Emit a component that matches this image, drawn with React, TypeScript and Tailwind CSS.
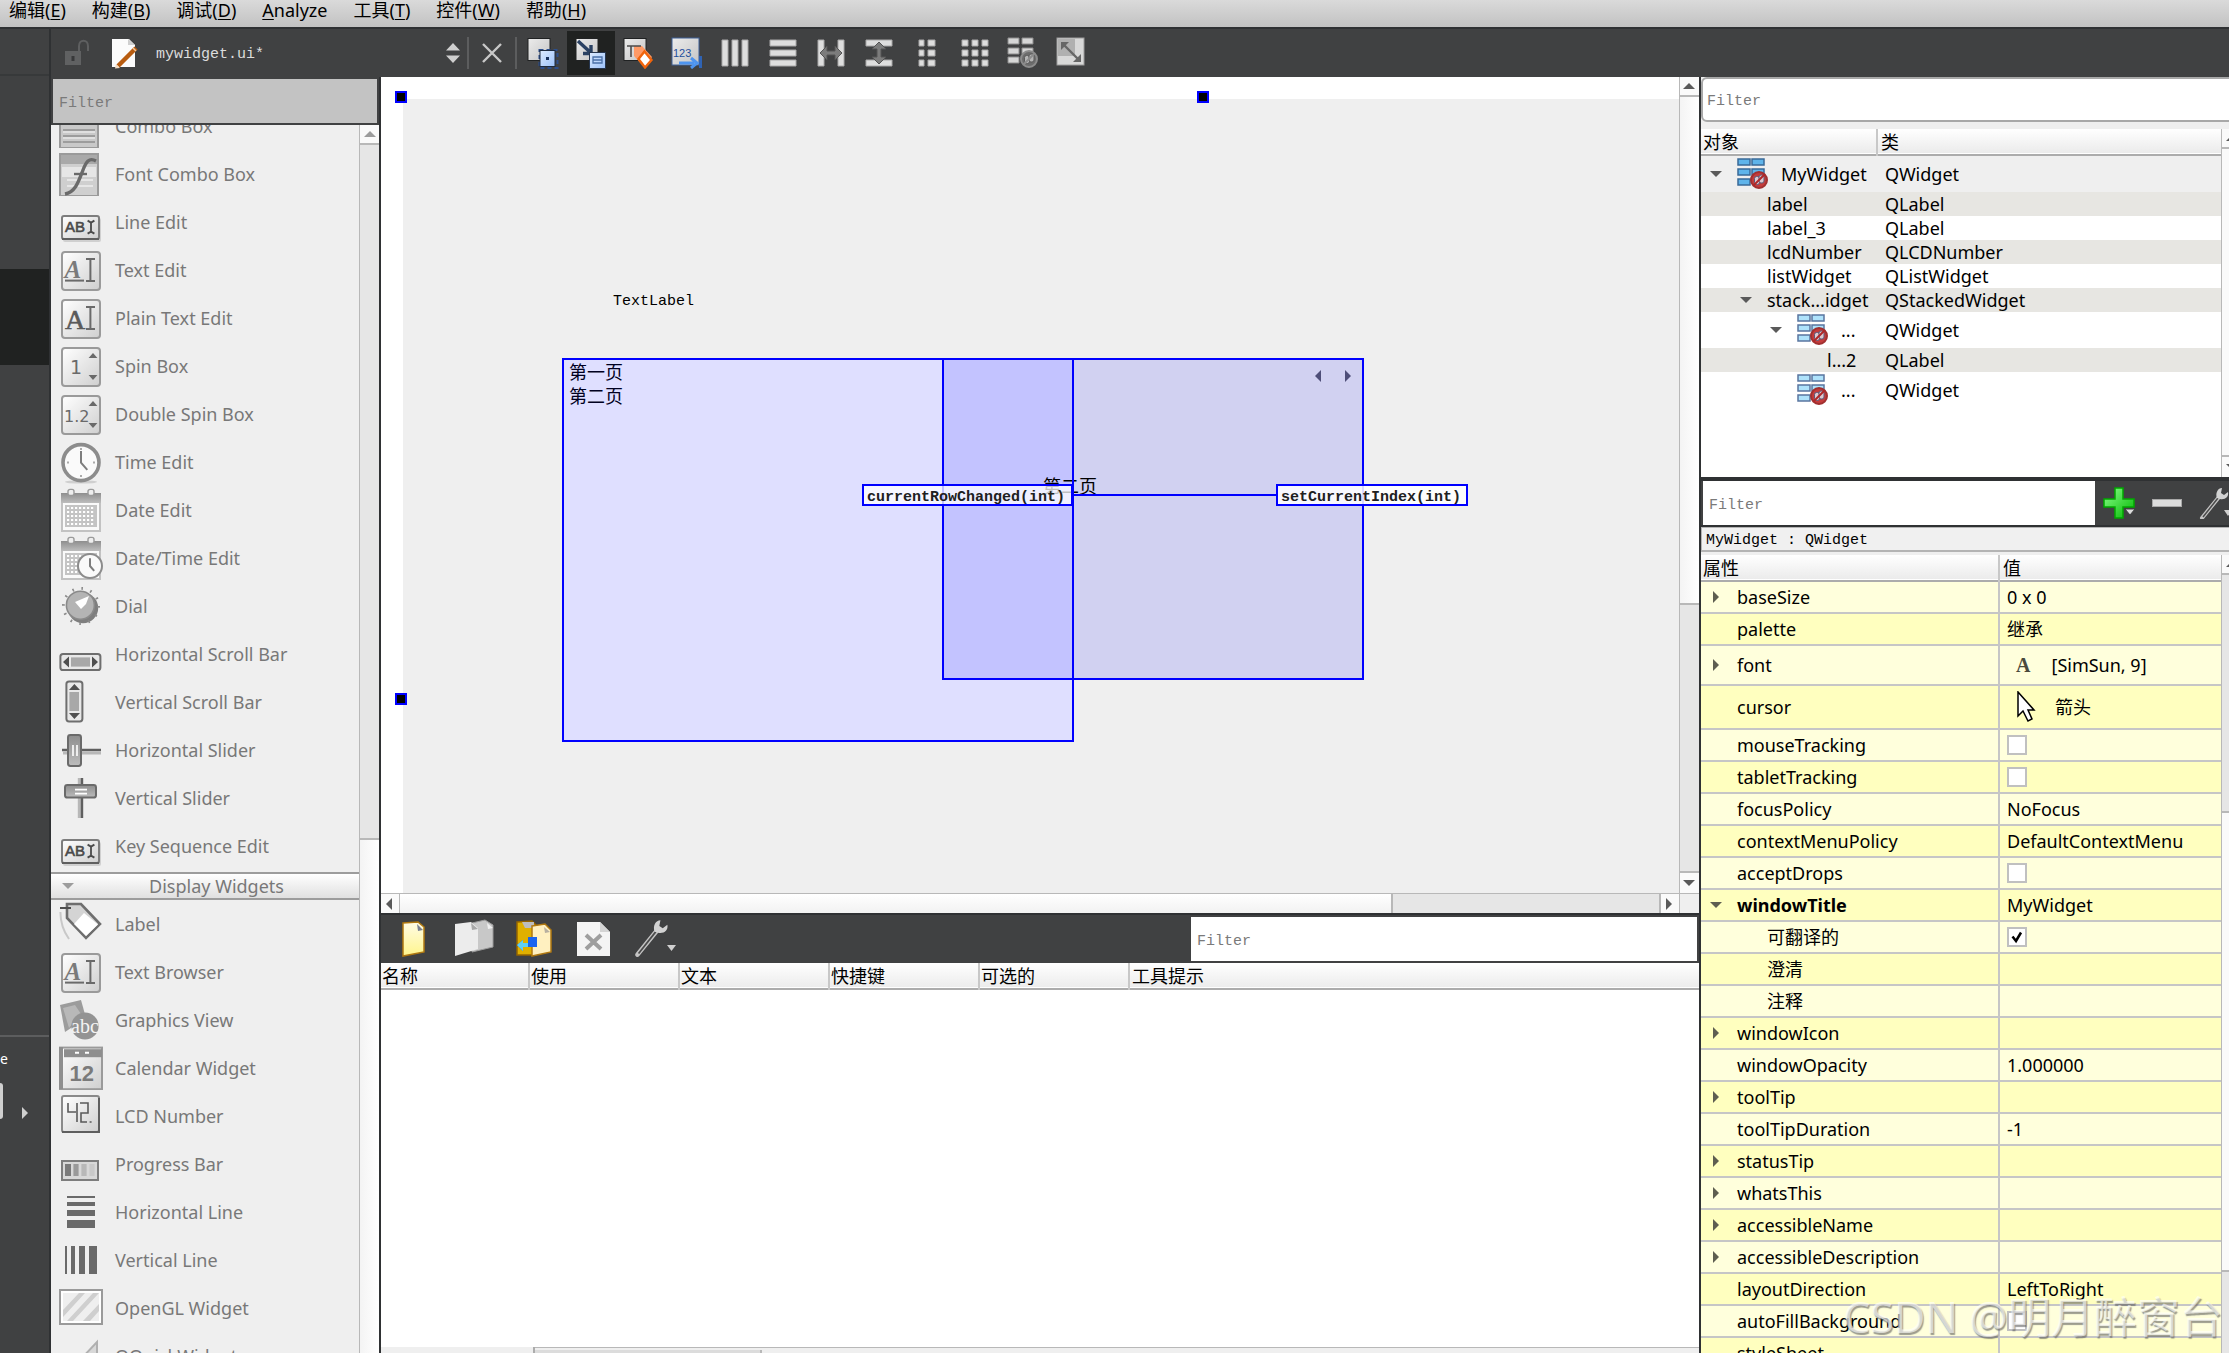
import React from "react";
import clsx from "clsx";

const UI = "font-['Noto_Sans','Noto_Sans_CJK_SC',sans-serif]";
const MONO = "font-['Liberation_Mono','Noto_Sans_CJK_SC',monospace]";

/* ---------- small shared pieces ---------- */

type Dir = "up" | "down" | "left" | "right";

const arrowPaths: Record<Dir, string> = {
  up: "M6 3 L12 9 L0 9 Z",
  down: "M0 3 L12 3 L6 9 Z",
  left: "M3 6 L9 0 L9 12 Z",
  right: "M3 0 L9 6 L3 12 Z",
};

const Arrow: React.FC<{ dir: Dir; className?: string }> = ({ dir, className }) => (
  <svg viewBox="0 0 12 12" className={clsx("h-3 w-3 shrink-0", className ?? "fill-[#5a5a5a]")}>
    <path d={arrowPaths[dir]} />
  </svg>
);

const ScrollButton: React.FC<{ dir: Dir; label: string; className?: string; arrow?: string }> = ({
  dir,
  label,
  className,
  arrow,
}) => (
  <button
    aria-label={label}
    className={clsx("flex shrink-0 items-center justify-center border-[#b8b8b8] bg-[#fafafa]", className)}
  >
    <Arrow dir={dir} className={arrow} />
  </button>
);

const Filter: React.FC<{ label: string; className?: string }> = ({ label, className }) => (
  <input
    aria-label={label}
    placeholder="Filter"
    className={clsx("min-w-0 pt-1 text-[15px] outline-none placeholder:text-[#7a7a7a]", MONO, className)}
  />
);

const Defs = () => (
  <svg className="absolute h-0 w-0" aria-hidden="true">
    <defs>
      <linearGradient id="metal" x1="0" y1="0" x2="1" y2="1">
        <stop offset="0" stopColor="#ffffff" />
        <stop offset="1" stopColor="#cfcfcf" />
      </linearGradient>
      <linearGradient id="steel" x1="0" y1="0" x2="0" y2="1">
        <stop offset="0" stopColor="#8e8e8e" />
        <stop offset="1" stopColor="#bdbdbd" />
      </linearGradient>
      <linearGradient id="paper" x1="0" y1="0" x2="1" y2="1">
        <stop offset="0" stopColor="#ececec" />
        <stop offset="1" stopColor="#c4c4c4" />
      </linearGradient>
      <linearGradient id="bluebox" x1="0" y1="0" x2="1" y2="1">
        <stop offset="0" stopColor="#dcebff" />
        <stop offset="1" stopColor="#9cc2fa" />
      </linearGradient>
      <linearGradient id="yellow" x1="0" y1="0" x2="0" y2="1">
        <stop offset="0" stopColor="#fffbe6" />
        <stop offset="1" stopColor="#fff58c" />
      </linearGradient>
      <linearGradient id="green" x1="0" y1="0" x2="1" y2="1">
        <stop offset="0" stopColor="#8dff8d" />
        <stop offset="1" stopColor="#00b800" />
      </linearGradient>
    </defs>
  </svg>
);

/* ---------- widget box icons, drawn on a 22 unit grid ---------- */

const Frame = () => (
  <rect x="1.5" y="2" width="19" height="19" rx="1.5" fill="url(#metal)" stroke="#9a9a9a" />
);

const AbiBox = () => (
  <>
    <rect x="2" y="9" width="19" height="12" rx="1" fill="#d0d0d0" />
    <rect x="1.5" y="8" width="18.5" height="11.5" rx="1" fill="url(#metal)" stroke="#7d7d7d" />
    <path d="M1.5 19.5 H20" stroke="#5f5f5f" />
    <text x="3" y="16.2" fontSize="7.5" fill="#4a4a4a" stroke="#4a4a4a" strokeWidth="0.3" className="font-['Liberation_Sans',sans-serif]">
      AB
    </text>
    <path d="M14.3 10.3 L16 11.3 L17.7 10.3 M16 11 V16 M14.3 16.8 L16 15.8 L17.7 16.8" stroke="#4a4a4a" strokeWidth="0.9" fill="none" />
  </>
);

const LetterI = () => <path d="M13.5 5.5 H18 M15.7 5.5 V16.5 M13.5 16.5 H18" stroke="#6a6a6a" fill="none" />;

const SpinArrows = () => (
  <path d="M14.8 7 L17 4.5 L19.2 7 Z M14.8 15.5 L17 18 L19.2 15.5 Z" fill="#6a6a6a" />
);

const CalendarBody = () => (
  <>
    <rect x="1.5" y="3.5" width="19" height="18" fill="#fafafa" stroke="#c2c2c2" />
    <rect x="1" y="2.5" width="20" height="5" fill="url(#steel)" />
    <rect x="4.5" y="0.7" width="3" height="3" rx="1" fill="#eee" stroke="#9a9a9a" strokeWidth="0.7" />
    <rect x="14.5" y="0.7" width="3" height="3" rx="1" fill="#eee" stroke="#9a9a9a" strokeWidth="0.7" />
    <rect x="3" y="8.5" width="16" height="11" fill="#c4c4c4" />
    <path d="M4 10 H18 M4 12 H18 M4 14 H18 M4 16 H18 M4 18 H18" stroke="#fff" strokeWidth="1.1" strokeDasharray="1.1 0.9" />
  </>
);

const ClockFace: React.FC<{ cx: number; cy: number; r: number }> = ({ cx, cy, r }) => (
  <>
    <circle cx={cx} cy={cy} r={r} fill="#fafafa" stroke="#8c8c8c" strokeWidth={r > 7 ? 1.8 : 1} />
    <path d={`M${cx} ${cy - r * 0.65} V${cy} L${cx + r * 0.35} ${cy + r * 0.4}`} stroke="#7d7d7d" fill="none" />
  </>
);

const widgetIcons: Record<string, React.ReactNode> = {
  combo: (
    <>
      <rect x="0.5" y="1" width="19" height="21" fill="#c9c9c9" stroke="#9a9a9a" />
      <path d="M2 13 H18 M2 16 H18 M2 19 H18" stroke="#8e8e8e" strokeWidth="0.8" />
      <path d="M2 14 H18 M2 17 H18" stroke="#e8e8e8" strokeWidth="0.8" />
    </>
  ),
  fontCombo: (
    <>
      <rect x="0.5" y="1" width="19" height="21" fill="#cfcfcf" stroke="#9a9a9a" />
      <rect x="1" y="1.5" width="18" height="4.5" fill="#a9a9a9" />
      <path d="M2 8 H18 V12 H2 Z M4 14 H17 M4 17 H17" fill="#e6e6e6" stroke="#e6e6e6" />
      <path d="M18.5 4.5 C15 2.5 13.5 5 12 9 C10 14 8.5 20 3 21" stroke="#6a6a6a" strokeWidth="1.7" fill="none" />
      <path d="M7.5 11 H14" stroke="#6a6a6a" strokeWidth="1.2" />
    </>
  ),
  abi: <AbiBox />,
  textEdit: (
    <>
      <Frame />
      <text x="2.8" y="15" fontSize="12.5" fontStyle="italic" fontWeight="bold" fill="#7a7a7a" className="font-['Liberation_Serif',serif]">
        A
      </text>
      <LetterI />
      <path d="M3 16.3 H12.5" stroke="#6a6a6a" />
    </>
  ),
  plainText: (
    <>
      <Frame />
      <text x="3" y="16.5" fontSize="14" fill="#5a5a5a" stroke="#5a5a5a" strokeWidth="0.3" className="font-['Liberation_Serif',serif]">
        A
      </text>
      <LetterI />
    </>
  ),
  spin: (
    <>
      <Frame />
      <text x="5.5" y="15" fontSize="9.5" fill="#6a6a6a" className="font-['DejaVu_Sans',sans-serif]">
        1
      </text>
      <SpinArrows />
    </>
  ),
  doubleSpin: (
    <>
      <Frame />
      <text x="2.5" y="15" fontSize="8" fill="#6a6a6a" className="font-['DejaVu_Sans',sans-serif]">
        1.2
      </text>
      <SpinArrows />
    </>
  ),
  time: (
    <>
      <ellipse cx="11" cy="21" rx="8" ry="0.8" fill="#cfcfcf" />
      <ClockFace cx={11} cy={11.3} r={9} />
      <path d="M11 4 V5 M18 11.3 H17 M11 18.5 V17.5 M4 11.3 H5" stroke="#aaa" />
    </>
  ),
  date: <CalendarBody />,
  dateTime: (
    <>
      <CalendarBody />
      <ClockFace cx={15.5} cy={15} r={6} />
    </>
  ),
  dial: (
    <>
      <circle cx="12" cy="12" r="7.6" fill="#7e7e7e" />
      <circle cx="11" cy="11" r="8.8" fill="none" stroke="#8a8a8a" strokeWidth="1.4" strokeDasharray="0.8 3.8" />
      <circle cx="10.7" cy="10.6" r="7" fill="#b4b4b4" stroke="#8a8a8a" strokeWidth="0.8" />
      <path d="M15 6 L13.5 10 L11 12.5 L8 9 Z" fill="#fff" />
    </>
  ),
  hScroll: (
    <>
      <rect x="0.7" y="11" width="20" height="8" rx="1.3" fill="#e8e8e8" stroke="#6e6e6e" />
      <rect x="6" y="12.7" width="9.5" height="4.6" fill="#a8a8a8" />
      <path d="M5 12.2 V17.8 L2 15 Z M16.5 12.2 V17.8 L19.5 15 Z" fill="#4f4f4f" />
    </>
  ),
  vScroll: (
    <>
      <rect x="3.7" y="0.7" width="8" height="20" rx="1.3" fill="#e8e8e8" stroke="#6e6e6e" />
      <rect x="5.2" y="6" width="4.8" height="9.5" fill="#a8a8a8" />
      <path d="M5 5 H10.5 L7.7 2 Z M5 16.5 H10.5 L7.7 19.5 Z" fill="#4f4f4f" />
    </>
  ),
  hSlider: (
    <>
      <path d="M1.5 11 H21" stroke="#5f5f5f" strokeWidth="1.2" />
      <path d="M2 12.5 H21" stroke="#b8b8b8" strokeWidth="1.6" />
      <rect x="4.5" y="3.5" width="6.5" height="15.5" rx="1.2" fill="url(#steel)" stroke="#6a6a6a" />
      <path d="M7 8.5 V14 M9 8.5 V14" stroke="#fff" strokeWidth="0.8" />
    </>
  ),
  vSlider: (
    <>
      <path d="M10.2 1 V21" stroke="#b8b8b8" strokeWidth="1.6" />
      <path d="M11.5 1 V21" stroke="#5f5f5f" strokeWidth="1.2" />
      <rect x="3" y="4.5" width="15.5" height="6.3" rx="1.2" fill="url(#steel)" stroke="#6a6a6a" />
      <path d="M8 6.8 H14 M8 8.8 H14" stroke="#fff" strokeWidth="0.8" />
    </>
  ),
  label: (
    <>
      <path d="M4 1 L11 1 L20.5 11 L13.5 18 L4 8 Z" fill="#d4d4d4" stroke="#6e6e6e" strokeWidth="1.3" />
      <path d="M12.5 5.5 L19.5 11.2 L13.5 17 L7.5 11 Z" fill="#fff" />
      <path d="M0.5 3 H6" stroke="#4f4f4f" />
      <path d="M0.7 5 C0.7 11 2.5 15 5 18.5" stroke="#c8c8c8" fill="none" />
    </>
  ),
  graphics: (
    <>
      <path d="M0.5 3.5 L11 1 L13.5 10 L3 17 Z" fill="#9c9c9c" />
      <path d="M2 5 L8 3.5 L11 8 L5 15 Z" fill="#b8b8b8" />
      <circle cx="13" cy="14" r="6.8" fill="#939393" />
      <text x="6" y="17.5" fontSize="10" fill="#f4f4f4" className="font-['Liberation_Serif',serif]">
        abc
      </text>
    </>
  ),
  calendar: (
    <>
      <rect x="0.5" y="0.8" width="21" height="20.8" fill="url(#metal)" stroke="#9a9a9a" />
      <rect x="0" y="0.5" width="2" height="21" fill="#8e8e8e" />
      <rect x="2.5" y="1.6" width="19" height="4" fill="#8e8e8e" />
      <path d="M8 3.4 H10 M13 3.4 H15" stroke="#fff" />
      <text x="5.2" y="17.7" fontSize="11" fontWeight="bold" fill="#7a7a7a" className="font-['Liberation_Sans',sans-serif]">
        12
      </text>
    </>
  ),
  lcd: (
    <>
      <rect x="1.5" y="1" width="18.5" height="18" rx="1" fill="url(#metal)" stroke="#8a8a8a" />
      <path d="M1.5 19 H20 V2" stroke="#5f5f5f" fill="none" />
      <path d="M4.500 4.500 V9 H8.500 M9 4.500 V14 M10.500 4.500 H14.500 V9.500 H11 V14 H14 M15.300 14 H16.300" stroke="#5a5a5a" strokeWidth="0.8" fill="none" />
    </>
  ),
  progress: (
    <>
      <rect x="1.5" y="9.5" width="18" height="9.5" fill="#d8d8d8" stroke="#7d7d7d" />
      <path d="M4.5 11 V17" stroke="#7a7a7a" strokeWidth="3" />
      <path d="M8.5 11 V17" stroke="#9a9a9a" strokeWidth="2.6" />
      <path d="M12.5 11 V17" stroke="#b8b8b8" strokeWidth="2.6" />
      <path d="M16.5 11 V17" stroke="#c9c9c9" strokeWidth="2.6" />
    </>
  ),
  hLine: <path d="M4 3 H18 V4 H4 Z M4 6 H18 V8 H4 Z M4 10 H18 V13 H4 Z M4 15 H18 V19 H4 Z" fill="#6a6a6a" />,
  vLine: <path d="M3 4 H4 V18 H3 Z M6 4 H8 V18 H6 Z M10 4 H13 V18 H10 Z M15 4 H19 V18 H15 Z" fill="#6a6a6a" />,
  opengl: (
    <>
      <rect x="0.5" y="2" width="21" height="17" fill="#fff" stroke="#9a9a9a" />
      <rect x="2" y="3.5" width="18" height="14" fill="#efefef" />
      <path d="M2 12 L10 3.5 H13 L2 15.5 Z M4 17.5 L17 3.5 H20 L7 17.5 Z M12 17.5 L20 9 V12.5 L15.5 17.5 Z" fill="#cfcfcf" />
    </>
  ),
  quick: <path d="M2 22 L19 4 V22 Z" fill="#d8d8d8" stroke="#b0b0b0" />,
};

const inputWidgets = [
  ["combo", "Combo Box"],
  ["fontCombo", "Font Combo Box"],
  ["abi", "Line Edit"],
  ["textEdit", "Text Edit"],
  ["plainText", "Plain Text Edit"],
  ["spin", "Spin Box"],
  ["doubleSpin", "Double Spin Box"],
  ["time", "Time Edit"],
  ["date", "Date Edit"],
  ["dateTime", "Date/Time Edit"],
  ["dial", "Dial"],
  ["hScroll", "Horizontal Scroll Bar"],
  ["vScroll", "Vertical Scroll Bar"],
  ["hSlider", "Horizontal Slider"],
  ["vSlider", "Vertical Slider"],
  ["abi", "Key Sequence Edit"],
];

const displayWidgets = [
  ["label", "Label"],
  ["textEdit", "Text Browser"],
  ["graphics", "Graphics View"],
  ["calendar", "Calendar Widget"],
  ["lcd", "LCD Number"],
  ["progress", "Progress Bar"],
  ["hLine", "Horizontal Line"],
  ["vLine", "Vertical Line"],
  ["opengl", "OpenGL Widget"],
  ["quick", "QQuickWidget"],
];

const WidgetList: React.FC<{ items: string[][] }> = ({ items }) => (
  <ul>
    {items.map(([icon, name]) => (
      <li key={name} className="flex h-12 items-center gap-3 pl-2">
        <svg viewBox="0 0 22 22" className="h-11 w-11 shrink-0">
          {widgetIcons[icon]}
        </svg>
        <span>{name}</span>
      </li>
    ))}
  </ul>
);

const WidgetBox = () => (
  <aside className="flex w-[330px] shrink-0 flex-col border-r-2 border-[#2f3133] bg-[#404142]">
    <Filter label="Filter widgets" className="mx-0.5 mt-0.5 h-11 bg-[#c3c3c3] px-1.5" />
    <div className="mt-0.5 flex min-h-0 flex-1">
      <div className="min-w-0 flex-1 overflow-hidden bg-[#efefef]">
        <div className="-mt-[23px] text-lg text-[#787878]">
          <WidgetList items={inputWidgets} />
          <h2 className="mt-0.5 flex h-7 items-center border-y-2 border-[#9c9c9c] bg-gradient-to-b from-white to-[#e0e0e0] pl-[11px]">
            <Arrow dir="down" className="fill-[#9c9c9c]" />
            <span className="flex-1 text-center">Display Widgets</span>
          </h2>
          <WidgetList items={displayWidgets} />
        </div>
      </div>
      <div className="flex w-5 shrink-0 flex-col border-l border-[#b8b8b8] bg-[#e6e6e6]">
        <ScrollButton dir="up" label="Scroll up" className="h-5 border-b-2" arrow="fill-[#9c9c9c]" />
        <div className="flex-1" />
        <div className="h-[515px] border-t-2 border-[#b8b8b8] bg-gradient-to-r from-[#f4f4f4] to-white" />
      </div>
    </div>
  </aside>
);

/* ---------- top bars ---------- */

const menus = [
  ["编辑", "E"],
  ["构建", "B"],
  ["调试", "D"],
  ["", "Analyze"],
  ["工具", "T"],
  ["控件", "W"],
  ["帮助", "H"],
];

const MenuBar = () => (
  <nav className="flex h-[29px] shrink-0 items-start gap-[26px] border-b-2 border-[#2f3133] bg-gradient-to-b from-[#dadada] to-[#c2c2c2] pl-[9px] text-lg leading-5 text-black">
    {menus.map(([name, key]) => (
      <button key={key} className="whitespace-nowrap">
        {name ? (
          <>
            {name}(<u className="underline-offset-2">{key}</u>)
          </>
        ) : (
          <>
            <u className="underline-offset-2">{key[0]}</u>
            {key.slice(1)}
          </>
        )}
      </button>
    ))}
  </nav>
);

const BackPage = () => <rect x="1" y="1.5" width="22" height="22" fill="url(#paper)" stroke="#202223" />;

const BreakBadge: React.FC<{ cx: number; cy: number; red?: boolean }> = ({ cx, cy, red }) => (
  <>
    <circle cx={cx} cy={cy} r="8" fill={red ? "#c43c3c" : "#6c6c6c"} stroke={red ? "#a03030" : "#8c8c8c"} strokeWidth="2" />
    <rect x={cx - 4.5} y={cy - 3.5} width="5" height="8" rx="2" fill={red ? "#dcc8d0" : "#b4b4b4"} stroke={red ? "#5a5a78" : "#5a5a5a"} />
    <rect x={cx} y={cy - 5} width="5" height="8" rx="2" fill={red ? "#dcc8d0" : "#b4b4b4"} stroke={red ? "#5a5a78" : "#5a5a5a"} />
    <path d={`M${cx - 5.5} ${cy + 5.5} L${cx + 5.5} ${cy - 5.5}`} stroke={red ? "#b02828" : "#8c8c8c"} strokeWidth="2" />
  </>
);

const designerTools: { name: string; icon: React.ReactNode }[] = [
  {
    name: "Edit Widgets",
    icon: (
      <>
        <BackPage />
        <rect x="12.5" y="13" width="18" height="18" fill="none" stroke="#2c4f8c" strokeWidth="2" strokeDasharray="4 3" />
        <rect x="13" y="13.5" width="15" height="16" fill="url(#bluebox)" stroke="#1d2b40" />
        <rect x="19" y="20" width="3" height="3" fill="#16305c" />
      </>
    ),
  },
  {
    name: "Edit Signals/Slots",
    icon: (
      <>
        <BackPage />
        <path d="M3 4 L15 15 M16 8 V16.5 H8" stroke="#2a4163" strokeWidth="3.4" fill="none" />
        <rect x="14.5" y="15.5" width="16" height="16" fill="url(#bluebox)" stroke="#26364f" />
        <path d="M18 20 H27 V26 H18 Z M18 23 H27" stroke="#4a70a8" strokeWidth="1.3" fill="none" />
      </>
    ),
  },
  {
    name: "Edit Buddies",
    icon: (
      <>
        <BackPage />
        <path d="M11 9 L19 9 L29 20 L22 31 L11 19 Z" fill="#ff9a66" />
        <path d="M21.5 14.5 L28.500 23 L22 30.500 L15.500 22 Z" fill="#fff" stroke="#f0640c" strokeWidth="2.400" />
        <path d="M4 9 H18 M8 9 V20" stroke="#4c4c4c" strokeWidth="1.600" />
      </>
    ),
  },
  {
    name: "Edit Tab Order",
    icon: (
      <>
        <rect x="1" y="1" width="27" height="27" fill="url(#paper)" stroke="#3f6196" />
        <text x="2" y="20" fontSize="11" fill="#1f4f9c" className="font-['Liberation_Sans',sans-serif]">
          123
        </text>
        <path d="M8 26 H23 M20 21 L26 26 L20 31" stroke="#4d94ef" strokeWidth="3" fill="none" />
        <path d="M29.5 19 V31" stroke="#2f63b4" strokeWidth="3" />
      </>
    ),
  },
  { name: "Lay Out Horizontally", icon: <path d="M3 3 H9 V29 H3 Z M13 3 H19 V29 H13 Z M23 3 H29 V29 H23 Z" fill="#dedede" stroke="#a8a8a8" /> },
  { name: "Lay Out Vertically", icon: <path d="M3 3 H29 V9 H3 Z M3 13 H29 V19 H3 Z M3 23 H29 V29 H3 Z" fill="#dedede" stroke="#a8a8a8" /> },
  {
    name: "Lay Out Horizontally in Splitter",
    icon: (
      <>
        <path d="M3 3 H9 V29 H3 Z M23 3 H29 V29 H23 Z" fill="#dedede" stroke="#a8a8a8" />
        <path d="M5 16 L12 9 V14 H20 V9 L27 16 L20 23 V18 H12 V23 Z" fill="#7c7c7c" stroke="#555" />
      </>
    ),
  },
  {
    name: "Lay Out Vertically in Splitter",
    icon: (
      <>
        <path d="M3 3 H29 V9 H3 Z M3 23 H29 V29 H3 Z" fill="#dedede" stroke="#a8a8a8" />
        <path d="M16 5 L23 12 H18 V20 H23 L16 27 L9 20 H14 V12 H9 Z" fill="#7c7c7c" stroke="#555" />
      </>
    ),
  },
  {
    name: "Lay Out in a Form Layout",
    icon: <path d="M8 3 H13 V9 H8 Z M17 3 H24 V9 H17 Z M8 13 H13 V19 H8 Z M17 13 H24 V19 H17 Z M8 23 H13 V29 H8 Z M17 23 H24 V29 H17 Z" fill="#dedede" stroke="#a8a8a8" />,
  },
  {
    name: "Lay Out in a Grid",
    icon: (
      <path
        d="M3 3 H9 V9 H3 Z M13 3 H19 V9 H13 Z M23 3 H29 V9 H23 Z M3 13 H9 V19 H3 Z M13 13 H19 V19 H13 Z M23 13 H29 V19 H23 Z M3 23 H9 V29 H3 Z M13 23 H19 V29 H13 Z M23 23 H29 V29 H23 Z"
        fill="#dedede"
        stroke="#a8a8a8"
      />
    ),
  },
  {
    name: "Break Layout",
    icon: (
      <>
        <path d="M1 1 H12 V7 H1 Z M15 1 H26 V7 H15 Z M1 11 H12 V17 H1 Z M15 11 H26 V17 H15 Z M1 20 H12 V26 H1 Z" fill="#d6d6d6" stroke="#8c8c8c" />
        <BreakBadge cx={22} cy={22} />
      </>
    ),
  },
  {
    name: "Adjust Size",
    icon: (
      <>
        <rect x="2" y="1" width="27" height="27" fill="#d8d8d8" stroke="#9c9c9c" />
        <path d="M3 2 H20 V19 H3 Z" fill="#b0b0b0" />
        <path d="M9 8 L23 22" stroke="#666" strokeWidth="2.4" />
        <path d="M6 5 H14 L6 13 Z M26 25 H18 L26 17 Z" fill="#666" />
      </>
    ),
  },
];

const DesignerToolbar = () => (
  <div className="flex h-12 shrink-0 items-center bg-[#404142]">
    <button aria-label="Lock" className="ml-3.5 h-8 w-6">
      <svg viewBox="0 0 24 32" className="h-8 w-6">
        <path d="M14 14 V9 C14 2 23 2 23 9 V14" stroke="#5e5f60" strokeWidth="2" fill="none" />
        <rect x="0" y="14" width="16" height="14" fill="#606162" />
        <path d="M8 19 V24" stroke="#38393a" strokeWidth="3" />
      </svg>
    </button>
    <svg viewBox="0 0 28 32" className="ml-[22px] h-8 w-7 shrink-0">
      <path d="M1 2 H18 L24 8 V30 H1 Z" fill="#fbfbfb" />
      <path d="M17 2 V8 H24 Z" fill="#cfcfcf" />
      <path d="M7 29 L25 11" stroke="#b85c10" strokeWidth="4.5" />
      <path d="M4 31.5 L5 27 L9 31 Z" fill="#f3dcc4" />
      <path d="M22 11 L25 14" stroke="#f4c9a0" strokeWidth="1.5" />
    </svg>
    <div className="ml-[17px] flex w-[304px] shrink-0 items-center">
      <select
        aria-label="Open document"
        className={clsx("h-8 min-w-0 flex-1 appearance-none bg-transparent pt-1 text-[15px] text-[#dcdcdc] outline-none", MONO)}
      >
        <option>mywidget.ui*</option>
      </select>
      <svg viewBox="0 0 14 20" className="h-5 w-3.5 shrink-0 fill-[#cfcfcf]">
        <path d="M7 0 L14 7.5 H0 Z M0 12.5 H14 L7 20 Z" />
      </svg>
    </div>
    <span className="ml-[7px] h-8 w-0.5 shrink-0 bg-[#5c5d5e]" />
    <button aria-label="Close document" className="flex h-11 w-[46px] shrink-0 items-center justify-center">
      <svg viewBox="0 0 20 20" className="h-5 w-5">
        <path d="M1 1 L19 19 M19 1 L1 19" stroke="#c8c8c8" strokeWidth="2.4" />
      </svg>
    </button>
    <span className="mr-0.5 h-8 w-0.5 shrink-0 bg-[#5c5d5e]" />
    {designerTools.map((tool, i) => (
      <button
        key={tool.name}
        aria-label={tool.name}
        className={clsx("flex h-11 w-12 shrink-0 items-center justify-center", i === 1 && "bg-[#202221]")}
      >
        <svg viewBox="0 0 32 32" className="h-8 w-8">
          {tool.icon}
        </svg>
      </button>
    ))}
  </div>
);

const ModeBar = () => (
  <div className="flex w-[51px] shrink-0 flex-col border-r-2 border-[#2f3133] bg-[#404142]">
    <div className="h-[47px] border-b-2 border-[#37393a]" />
    <button aria-label="Design mode" className="mt-[193px] h-24 bg-[#202221]" />
    <div className="flex-1" />
    <div className="flex h-[318px] flex-col border-t-2 border-[#5c5d5e] pt-3">
      <span className="h-5 text-sm leading-5 text-white">e</span>
      <div className="mt-3.5 flex h-9 items-end">
        <button aria-label="Kit selector" className="h-9 w-[3px] rounded-r bg-[#cfcfcf]" />
        <Arrow dir="right" className="ml-4 fill-[#cfcfcf]" />
      </div>
    </div>
  </div>
);

/* ---------- form editor ---------- */

const Handle: React.FC<{ className: string }> = ({ className }) => (
  <span className={clsx("absolute h-3 w-3 border-2 border-[#0000ff] bg-black", className)} />
);

const FormCanvas = () => (
  <div className="relative min-w-0 flex-1 overflow-hidden bg-white pl-[22px] pt-[22px]">
    <div className="h-full w-full bg-[#efefef]" />
    <span className={clsx("absolute left-[232px] top-[214px] text-[15px] leading-[22px] text-black", MONO)}>TextLabel</span>
    <ul className="absolute left-[181px] top-[281px] h-96 w-[512px] border-2 border-[#0000ff] bg-[#dfdfff] pl-[5px] text-lg leading-6 text-[#000020]">
      <li>第一页</li>
      <li>第二页</li>
    </ul>
    <div className="absolute left-[561px] top-[281px] flex h-[322px] w-[422px] justify-end gap-[18px] border-2 border-[#0000ff] bg-[#0000ff]/[0.125] pr-2 pt-2.5">
      <button aria-label="Previous page" className="h-3">
        <Arrow dir="left" className="fill-[#4e4e78]" />
      </button>
      <button aria-label="Next page" className="h-3">
        <Arrow dir="right" className="fill-[#4e4e78]" />
      </button>
    </div>
    <span className="absolute left-[662px] top-[397px] text-lg leading-6 text-black">第二页</span>
    <span className="absolute left-[691px] top-[281px] h-96 w-0.5 bg-[#0000ff]" />
    <span className="absolute left-[692px] top-[417px] h-0.5 w-[204px] bg-[#0000ff]" />
    <span className={clsx("absolute left-[481px] top-[407px] h-[22px] w-[211px] border-2 border-[#0000ff] bg-white/75 pl-[3px] text-[15px] font-bold leading-6 text-[#202020]", MONO)}>
      currentRowChanged(int)
    </span>
    <span className={clsx("absolute left-[895px] top-[407px] h-[22px] w-48 border-2 border-[#0000ff] bg-white/85 pl-[3px] text-[15px] font-bold leading-6 text-[#202020]", MONO)}>
      setCurrentIndex(int)
    </span>
    <Handle className="left-3.5 top-3.5" />
    <Handle className="left-[816px] top-3.5" />
    <Handle className="left-3.5 top-[616px]" />
  </div>
);

const FormEditor = () => (
  <div className="flex h-[838px] shrink-0 flex-col border-b-2 border-[#2f3133]">
    <div className="flex min-h-0 flex-1">
      <FormCanvas />
      <div className="flex w-5 shrink-0 flex-col border-l border-[#b8b8b8] bg-[#e6e6e6]">
        <ScrollButton dir="up" label="Scroll up" className="h-5 border-b-2 pr-0.5" />
        <div className="h-[508px] border-b-2 border-[#b8b8b8] bg-gradient-to-r from-[#f4f4f4] to-white" />
        <div className="flex-1" />
        <ScrollButton dir="down" label="Scroll down" className="h-[22px] border-t-2 pr-0.5" />
      </div>
    </div>
    <div className="flex h-5 shrink-0 border-t border-[#b8b8b8] bg-[#e6e6e6]">
      <ScrollButton dir="left" label="Scroll left" className="w-[19px] border-r pr-0.5" />
      <div className="h-full w-[993px] shrink-0 border-r-2 border-[#b8b8b8] bg-gradient-to-b from-white to-[#f2f2f2]" />
      <div className="flex-1" />
      <ScrollButton dir="right" label="Scroll right" className="w-5 border-l-2 pr-0.5" />
      <div className="w-5 shrink-0 border-l border-[#b8b8b8] bg-[#efefef]" />
    </div>
  </div>
);

/* ---------- action editor ---------- */

const Wrench = () => (
  <>
    <path d="M3 31 L20 10" stroke="#c4c4c4" strokeWidth="4" strokeLinecap="round" />
    <path d="M4 30 L19 11" stroke="#4a4a4a" strokeWidth="1.5" />
    <path d="M18 11 C16 6 19 1 23 1 L22 6 L25 8 L29 5 C30 10 26 13 21 12 Z" fill="#d2d2d2" />
  </>
);

const DropMark = () => <path d="M25 23 H33 L29 29 Z" fill="#d0d0d0" />;

const actionTools: { name: string; icon: React.ReactNode }[] = [
  {
    name: "New action",
    icon: (
      <>
        <path d="M7 2 L22 1 L28 6 V31 L7 35 Z" fill="url(#yellow)" stroke="#b07810" strokeWidth="1.5" />
        <path d="M21 3 L22 10 L27 9 Z" fill="#7a8090" />
      </>
    ),
  },
  {
    name: "Copy",
    icon: (
      <>
        <path d="M16 2 L29 -1 L37 4 V26 L16 31 Z" fill="#c8c8c8" stroke="#9a9a9a" />
        <path d="M31 2 L32 8 L37 7 Z" fill="#f0f0f0" />
        <path d="M-1 3 L15 1 L22 7 V28 L-1 35 Z" fill="#ececec" />
        <path d="M15 2 L16 9 L22 8 Z" fill="#a8a8a8" />
      </>
    ),
  },
  {
    name: "Paste",
    icon: (
      <>
        <path d="M1 1 L16 0 L20 4 V34 H1 Z" fill="#e0b000" stroke="#946400" strokeWidth="1.5" />
        <path d="M6 1 H18 V7 H9 Z" fill="#bdbdbd" />
        <path d="M16 5 L29 3 L35 9 V31 L16 35 Z" fill="#fff0c0" stroke="#b07810" strokeWidth="1.5" />
        <path d="M28 6 L29 12 L34 11 Z" fill="#b8b0a0" />
        <path d="M1 24 L7 19 V22 H12 V16 H21 V26 H7 V30 Z" fill="#1a64ef" />
        <path d="M1 24 L7 19 V22 H12 V26 H7 V30 Z" fill="#5fd0f4" />
      </>
    ),
  },
  {
    name: "Delete",
    icon: (
      <>
        <path d="M1 1 H24 L34 11 V35 H1 Z" fill="#f4f4f4" />
        <path d="M24 1 V11 H34 Z" fill="#d4d4d4" />
        <path d="M10 14 L25 28 M25 14 L10 28" stroke="#9e9e9e" strokeWidth="4" />
      </>
    ),
  },
  {
    name: "Configure",
    icon: (
      <>
        <g transform="translate(-2 -2) scale(1.15)">
          <Wrench />
        </g>
        <path d="M31 24 H40 L35.5 30 Z" fill="#d0d0d0" />
      </>
    ),
  },
];

const actionColumns = ["名称", "使用", "文本", "快捷键", "可选的"];

const ActionEditor = () => (
  <section className="flex min-h-0 flex-1 flex-col bg-white">
    <div className="flex h-12 shrink-0 items-center bg-[#404142] pl-[3px] pr-0.5">
      {actionTools.map((tool) => (
        <button key={tool.name} aria-label={tool.name} className="flex h-11 w-[60px] shrink-0 items-center justify-center">
          <svg viewBox="0 0 36 36" className="h-9 w-9 overflow-visible">
            {tool.icon}
          </svg>
        </button>
      ))}
      <div className="flex-1" />
      <Filter label="Filter actions" className="h-11 w-[506px] bg-white px-1.5" />
    </div>
    <div className="min-h-0 flex-1">
      <table className="w-full table-fixed border-collapse text-left text-lg leading-6 text-black">
        <thead>
          <tr className="h-[26px] border-b-2 border-[#acacac] bg-gradient-to-b from-white to-[#ececec]">
            {actionColumns.map((name, i) => (
              <th
                key={name}
                className={clsx("border-r-2 border-[#c8c8c8] p-0 pl-px pt-px font-normal", i === 0 ? "w-[148px]" : "w-[150px]")}
              >
                {name}
              </th>
            ))}
            <th className="p-0 pl-0.5 pt-px font-normal">工具提示</th>
          </tr>
        </thead>
      </table>
    </div>
    <div className="flex h-1.5 shrink-0 bg-[#efefef]">
      <div className="w-[154px] border-r-2 border-[#acacac]" />
      <div className="flex-1 border-t border-[#b8b8b8] pt-0.5">
        <div className="h-[3px] w-[227px] border-r-2 border-[#b8b8b8] bg-[#dcdcdc]" />
      </div>
    </div>
  </section>
);

/* ---------- object inspector ---------- */

const LayoutIcon: React.FC<{ selected?: boolean }> = ({ selected }) => (
  <svg viewBox="0 0 32 32" className="h-8 w-8 shrink-0">
    <path
      d="M1 1 H13 V7 H1 Z M15 1 H27 V7 H15 Z M1 11 H13 V17 H1 Z M15 11 H27 V17 H15 Z M1 21 H13 V27 H1 Z"
      fill={selected ? "#5fb4ea" : "#aee2fb"}
      stroke={selected ? "#3a6a98" : "#5a76a0"}
      strokeWidth="1.5"
    />
    <BreakBadge cx={22} cy={22} red />
  </svg>
);

type TreeRow = { name: string; cls: string; indent: string; open?: boolean; icon?: boolean };

const treeRows: TreeRow[] = [
  { name: "MyWidget", cls: "QWidget", indent: "pl-[9px]", open: true, icon: true },
  { name: "label", cls: "QLabel", indent: "pl-[66px]" },
  { name: "label_3", cls: "QLabel", indent: "pl-[66px]" },
  { name: "lcdNumber", cls: "QLCDNumber", indent: "pl-[66px]" },
  { name: "listWidget", cls: "QListWidget", indent: "pl-[66px]" },
  { name: "stack...idget", cls: "QStackedWidget", indent: "pl-[39px]", open: true },
  { name: "...", cls: "QWidget", indent: "pl-[69px]", open: true, icon: true },
  { name: "l...2", cls: "QLabel", indent: "pl-[126px]" },
  { name: "...", cls: "QWidget", indent: "pl-24", icon: true },
];

const ObjectInspector = () => (
  <section className="flex h-[404px] shrink-0 flex-col border-b-4 border-[#2f3133] bg-[#efefef]">
    <Filter label="Filter objects" className="-mr-2 h-[45px] shrink-0 rounded-md border-2 border-[#a8a8a8] bg-white px-1" />
    <div className="mt-[7px] flex min-h-0 flex-1">
      <div className="min-w-0 flex-1 bg-white">
        <table className="w-full table-fixed border-collapse text-left text-lg leading-6 text-black">
          <thead>
            <tr className="h-[26px] border-b-2 border-[#acacac] bg-gradient-to-b from-white to-[#ebebeb]">
              <th className="w-44 border-r-2 border-[#c8c8c8] p-0 pl-0.5 font-normal">对象</th>
              <th className="p-0 pl-[3px] font-normal">类</th>
            </tr>
          </thead>
          <tbody>
            {treeRows.map((row, i) => (
              <tr key={i} className={i === 0 ? "bg-[#efefef]" : i % 2 ? "bg-[#e7e6e2]" : "bg-white"}>
                <td className="p-0">
                  <div className={clsx("flex items-center whitespace-nowrap", row.icon ? "h-9" : "h-6", row.indent)}>
                    {row.open && <Arrow dir="down" className="mr-[15px] fill-[#5a5a5a]" />}
                    {row.icon && (
                      <span className="mr-3">
                        <LayoutIcon selected={i === 0} />
                      </span>
                    )}
                    {row.name}
                  </div>
                </td>
                <td className="p-0 pl-2">{row.cls}</td>
              </tr>
            ))}
          </tbody>
        </table>
      </div>
      <div className="w-2 shrink-0 overflow-hidden border-l border-[#b8b8b8]">
        <div className="flex h-full w-5 flex-col bg-[#fafafa]">
          <ScrollButton dir="up" label="Scroll up" className="h-5 border-b-2" />
          <div className="flex-1" />
          <ScrollButton dir="down" label="Scroll down" className="h-[22px] border-t-2" />
        </div>
      </div>
    </div>
  </section>
);

/* ---------- property editor ---------- */

type Property = {
  name: string;
  value?: string;
  expand?: "open" | "closed";
  checked?: boolean;
  child?: boolean;
  icon?: "font" | "cursor";
};

const properties: Property[] = [
  { name: "baseSize", value: "0 x 0", expand: "closed" },
  { name: "palette", value: "继承" },
  { name: "font", value: "[SimSun, 9]", expand: "closed", icon: "font" },
  { name: "cursor", value: "箭头", icon: "cursor" },
  { name: "mouseTracking", checked: false },
  { name: "tabletTracking", checked: false },
  { name: "focusPolicy", value: "NoFocus" },
  { name: "contextMenuPolicy", value: "DefaultContextMenu" },
  { name: "acceptDrops", checked: false },
  { name: "windowTitle", value: "MyWidget", expand: "open" },
  { name: "可翻译的", checked: true, child: true },
  { name: "澄清", child: true },
  { name: "注释", child: true },
  { name: "windowIcon", expand: "closed" },
  { name: "windowOpacity", value: "1.000000" },
  { name: "toolTip", expand: "closed" },
  { name: "toolTipDuration", value: "-1" },
  { name: "statusTip", expand: "closed" },
  { name: "whatsThis", expand: "closed" },
  { name: "accessibleName", expand: "closed" },
  { name: "accessibleDescription", expand: "closed" },
  { name: "layoutDirection", value: "LeftToRight" },
  { name: "autoFillBackground", checked: false },
  { name: "styleSheet" },
];

const CheckBox: React.FC<{ id: string; checked: boolean }> = ({ id, checked }) => (
  <span className="grid h-5 w-5">
    <input
      id={id}
      type="checkbox"
      defaultChecked={checked}
      className="peer col-start-1 row-start-1 h-5 w-5 appearance-none border-2 border-[#c0c0c0] bg-white"
    />
    <svg viewBox="0 0 20 20" className="pointer-events-none invisible col-start-1 row-start-1 h-5 w-5 peer-checked:visible">
      <path d="M5.5 9.5 L9 14 L14 5.5" stroke="#000" strokeWidth="2.5" fill="none" />
    </svg>
  </span>
);

const CursorIcon = () => (
  <svg viewBox="0 0 20 32" className="ml-2.5 mr-[18px] h-8 w-5 shrink-0">
    <path d="M1 1 V25 L6 20 L11 30 L15 28 L11 19 H17 Z" fill="#fff" stroke="#000" strokeWidth="1.5" />
  </svg>
);

const PropertyEditor = () => (
  <section className="flex min-h-0 flex-1 flex-col bg-[#efefef]">
    <div className="flex h-[46px] shrink-0 items-center overflow-hidden border-b-2 border-[#2f3133] bg-[#404142] pl-0.5">
      <Filter label="Filter properties" className="h-11 flex-1 bg-white px-1.5" />
      <button aria-label="Add property" className="flex h-11 w-12 shrink-0 items-center justify-center">
        <svg viewBox="0 0 32 32" className="h-8 w-8">
          <path d="M12 1 H20 V12 H31 V20 H20 V31 H12 V20 H1 V12 H12 Z" fill="url(#green)" stroke="#00a800" strokeWidth="1.5" />
          <path d="M22 22 H32 L27 28 Z" fill="#dcdcdc" stroke="#404142" />
        </svg>
      </button>
      <button aria-label="Remove property" className="flex h-11 w-12 shrink-0 items-center justify-center">
        <svg viewBox="0 0 32 32" className="h-8 w-8">
          <rect x="1.5" y="12.5" width="29" height="7" fill="#dcdcdc" stroke="#a8a8a8" />
        </svg>
      </button>
      <button aria-label="Configure property editor" className="flex h-11 w-[38px] shrink-0 items-center pl-2">
        <svg viewBox="0 0 32 32" className="h-8 w-8 shrink-0">
          <Wrench />
          <DropMark />
        </svg>
      </button>
    </div>
    <p className={clsx("h-[25px] shrink-0 border-b-2 border-l border-t border-[#b4b4b4] bg-[#f0f0f0] pl-1 text-[15px] leading-[26px] text-black", MONO)}>
      MyWidget : QWidget
    </p>
    <div className="mt-[3px] flex min-h-0 flex-1">
      <div className="min-w-0 flex-1 overflow-hidden bg-white">
        <table className="w-full table-fixed border-collapse text-left text-lg leading-6 text-black">
          <thead>
            <tr className="h-[26px] border-b-2 border-[#acacac] bg-gradient-to-b from-white to-[#ebebeb]">
              <th className="w-[298px] border-r-2 border-[#c8c8c8] p-0 pl-0.5 font-normal">属性</th>
              <th className="p-0 pl-[3px] font-normal">值</th>
            </tr>
          </thead>
          <tbody>
            {properties.map((prop, i) => (
              <tr
                key={prop.name}
                className={clsx(
                  "border-b-2 border-[#c6c6c6]",
                  i % 2 ? "bg-[#ffffbf]" : "bg-[#ffffdc]",
                  prop.icon === "font" ? "h-10" : prop.icon === "cursor" ? "h-11" : "h-8"
                )}
              >
                <td className="border-r-2 border-[#c6c6c6] p-0">
                  <div className={clsx("flex items-center pl-[9px]", prop.expand === "open" && "font-bold")}>
                    <span className="w-[27px] shrink-0">
                      {prop.expand && <Arrow dir={prop.expand === "open" ? "down" : "right"} className="fill-[#5e5e50]" />}
                    </span>
                    {prop.checked === undefined ? (
                      <span className={clsx(prop.child && "pl-[30px]")}>{prop.name}</span>
                    ) : (
                      <label htmlFor={prop.name} className={clsx(prop.child && "pl-[30px]")}>
                        {prop.name}
                      </label>
                    )}
                  </div>
                </td>
                <td className="p-0 pl-[7px]">
                  <div className="flex items-center whitespace-nowrap">
                    {prop.checked !== undefined && <CheckBox id={prop.name} checked={prop.checked} />}
                    {prop.icon === "font" && (
                      <span className="ml-[9px] mr-[21px] font-['Liberation_Serif',serif] text-xl font-bold text-[#4a4a3c]">A</span>
                    )}
                    {prop.icon === "cursor" && <CursorIcon />}
                    {prop.value}
                  </div>
                </td>
              </tr>
            ))}
          </tbody>
        </table>
      </div>
      <div className="w-2 shrink-0 overflow-hidden border-l border-[#b8b8b8]">
        <div className="flex h-full w-5 flex-col bg-[#e6e6e6]">
          <ScrollButton dir="up" label="Scroll up" className="h-5 border-b-2" />
          <div className="h-[236px] shrink-0" />
          <div className="flex-1 border-y-2 border-[#b8b8b8] bg-[#fafafa]" />
          <div className="h-[81px] shrink-0" />
        </div>
      </div>
    </div>
  </section>
);

const App: React.FC = () => {
  return (
    <div className={clsx("relative flex h-screen flex-col overflow-hidden bg-[#404142]", UI)}>
      <Defs />
      <MenuBar />
      <div className="flex min-h-0 flex-1">
        <ModeBar />
        <main className="flex min-w-0 flex-1 flex-col">
          <DesignerToolbar />
          <div className="flex min-h-0 flex-1">
            <WidgetBox />
            <div className="flex min-w-0 flex-1 flex-col border-r-2 border-[#2f3133]">
              <FormEditor />
              <ActionEditor />
            </div>
            <div className="flex w-[528px] shrink-0 flex-col">
              <ObjectInspector />
              <PropertyEditor />
            </div>
          </div>
        </main>
      </div>
      <p className="pointer-events-none absolute bottom-2 right-1.5 whitespace-nowrap text-[43px] leading-[56px] text-white/60 [text-shadow:1px_2px_1px_rgba(90,90,90,0.6)]">
        CSDN @明月醉窗台
      </p>
    </div>
  );
};

export default App;
